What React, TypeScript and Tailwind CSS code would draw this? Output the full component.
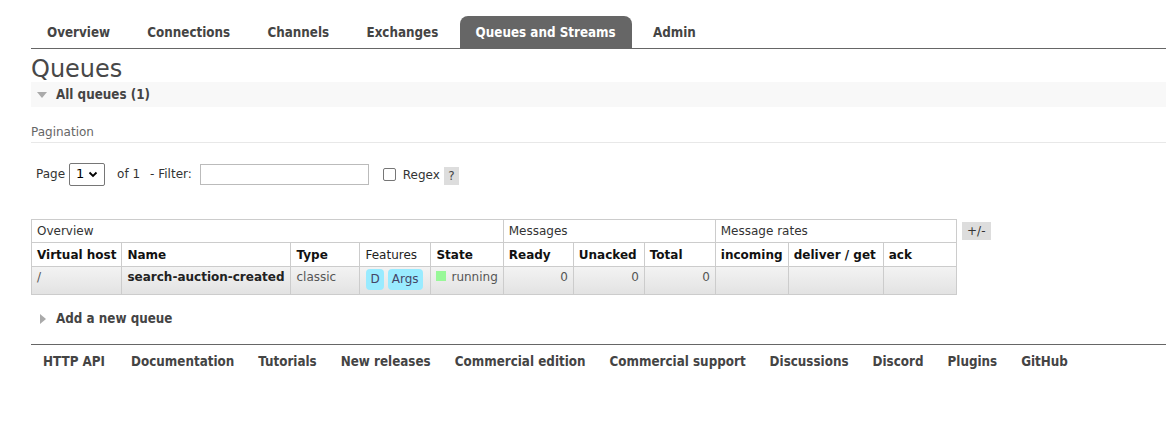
import React from "react";

const tabs = ["Overview", "Connections", "Channels", "Exchanges", "Queues and Streams", "Admin"];
const footer = [
  "HTTP API",
  "Documentation",
  "Tutorials",
  "New releases",
  "Commercial edition",
  "Commercial support",
  "Discussions",
  "Discord",
  "Plugins",
  "GitHub",
];

const cond = { fontFamily: '"DejaVu Sans Condensed", "DejaVu Sans", sans-serif' };

export default function App() {
  return (
    <div
      className="w-[1166px] h-[435px] bg-white pl-[31px] text-[12px] text-[#484848] overflow-hidden"
      style={{ fontFamily: '"DejaVu Sans", Verdana, sans-serif' }}
    >
      {/* Top tabs */}
      <ul className="flex pt-[16px] border-b border-[#666]">
        {tabs.map((t) => (
          <li
            key={t}
            style={cond}
            className={
              t === "Queues and Streams"
                ? "h-[32px] px-[16px] pt-[2px] mr-[5.25px] flex items-center rounded-t-[8px] bg-[#666] text-white font-bold text-[13.3px]"
                : "h-[32px] px-[16px] pt-[2px] mr-[5.25px] flex items-center text-[#444] font-bold text-[13.3px]"
            }
          >
            {t}
          </li>
        ))}
      </ul>

      <h1 className="h-[33px] text-[24px] leading-[40px] text-[#484848] font-normal">Queues</h1>

      {/* All queues section header */}
      <div className="h-[25px] bg-[#f8f8f8] flex items-center pl-[6px]">
        <span className="w-0 h-0 border-l-[5px] border-r-[5px] border-t-[6px] border-l-transparent border-r-transparent border-t-[#aaa] mr-[9px]" />
        <span style={cond} className="font-bold text-[13.3px] text-[#444]">
          All queues (1)
        </span>
      </div>

      {/* Pagination */}
      <div className="mt-[17px] pb-[2px] border-b border-[#e8e8e8] text-[#666] leading-[16px]">Pagination</div>

      <div className="flex items-center mt-[19px] h-[24px] pl-[5px] text-[#333]">
        <span>Page</span>
        <div className="ml-[4px] w-[36px] h-[23px] border border-[#767676] rounded-[2px] flex items-center justify-between px-[6px] text-[13px] text-black">
          <span>1</span>
          <svg width="10" height="7" viewBox="0 0 10 7">
            <path d="M1.5 1.5 L5 5 L8.5 1.5" fill="none" stroke="#000" strokeWidth="1.8" />
          </svg>
        </div>
        <span className="ml-[12px]">of 1</span>
        <span className="ml-[10px]">- Filter:</span>
        <div className="ml-[8px] w-[169px] h-[21px] border border-[#bbb]" />
        <div className="ml-[14px] w-[13px] h-[13px] border border-[#767676] rounded-[2px]" />
        <span className="ml-[7px] mt-[2px]">Regex</span>
        <span className="ml-[4px] mt-[4px] w-[15px] h-[18px] bg-[#ddd] flex items-center justify-center text-[#444]">?</span>
      </div>

      {/* Queues table */}
      <div className="flex items-start mt-[33px]">
        <table className="border-collapse table-fixed text-[12px]">
          <colgroup>
            <col className="w-[89px]" />
            <col className="w-[169px]" />
            <col className="w-[69px]" />
            <col className="w-[71px]" />
            <col className="w-[72px]" />
            <col className="w-[70px]" />
            <col className="w-[71px]" />
            <col className="w-[71px]" />
            <col className="w-[73px]" />
            <col className="w-[95px]" />
            <col className="w-[73px]" />
          </colgroup>
          <thead>
            <tr className="h-[23px]">
              <th colSpan={5} className="border border-[#ccc] text-left font-normal px-[5px] text-[#333]">
                Overview
              </th>
              <th colSpan={3} className="border border-[#ccc] text-left font-normal px-[5px] text-[#333]">
                Messages
              </th>
              <th colSpan={3} className="border border-[#ccc] text-left font-normal px-[5px] text-[#333]">
                Message rates
              </th>
            </tr>
            <tr className="h-[24px]">
              {["Virtual host", "Name", "Type", "Features", "State", "Ready", "Unacked", "Total", "incoming", "deliver / get", "ack"].map(
                (h) => (
                  <th
                    key={h}
                    className={
                      h === "Features"
                        ? "border border-[#ccc] text-left font-normal px-[5px] text-[#222] whitespace-nowrap"
                        : "border border-[#ccc] text-left font-bold px-[5px] text-[#111] whitespace-nowrap"
                    }
                  >
                    {h}
                  </th>
                )
              )}
            </tr>
          </thead>
          <tbody>
            <tr className="h-[28px] bg-gradient-to-b from-[#f3f3f3] to-[#e2e2e2] align-top text-[#555]">
              <td className="border border-[#ccc] px-[5px] pt-[1px]">/</td>
              <td className="border border-[#ccc] px-[5px] pt-[1px] font-bold text-[#222] whitespace-nowrap">
                search-auction-created
              </td>
              <td className="border border-[#ccc] px-[5px] pt-[1px]">classic</td>
              <td className="border border-[#ccc] px-[6px] pt-[2px] whitespace-nowrap">
                <span className="inline-block bg-[#99ebff] rounded-[4px] px-[4px] leading-[21px] text-[#446]">D</span>
                <span className="inline-block bg-[#99ebff] rounded-[4px] px-[4px] leading-[21px] ml-[4px] text-[#446]">
                  Args
                </span>
              </td>
              <td className="border border-[#ccc] px-[5px] pt-[1px] whitespace-nowrap">
                <span className="inline-block w-[10px] h-[10px] bg-[#98f898] mr-[5px]" />
                running
              </td>
              <td className="border border-[#ccc] px-[5px] pt-[1px] text-right">0</td>
              <td className="border border-[#ccc] px-[5px] pt-[1px] text-right">0</td>
              <td className="border border-[#ccc] px-[5px] pt-[1px] text-right">0</td>
              <td className="border border-[#ccc]" />
              <td className="border border-[#ccc]" />
              <td className="border border-[#ccc]" />
            </tr>
          </tbody>
        </table>
        <span className="ml-[5px] mt-[3px] w-[29px] h-[18px] bg-[#ddd] flex items-center justify-center text-[#333]">
          +/-
        </span>
      </div>

      {/* Add a new queue */}
      <div className="flex items-center mt-[16px] h-[16px] pl-[9px]">
        <span className="w-0 h-0 border-t-[5px] border-b-[5px] border-l-[6px] border-t-transparent border-b-transparent border-l-[#aaa] mr-[10px]" />
        <span style={cond} className="font-bold text-[13.3px] text-[#444]">
          Add a new queue
        </span>
      </div>

      {/* Footer */}
      <div className="mt-[17px] border-t border-[#666] flex pt-[7px] pl-[12px]">
        {footer.map((f) => (
          <span
            key={f}
            style={cond}
            className={
              f === "HTTP API"
                ? "font-bold text-[13.3px] text-[#444] mr-[26px]"
                : "font-bold text-[13.3px] text-[#444] mr-[24px]"
            }
          >
            {f}
          </span>
        ))}
      </div>
    </div>
  );
}
